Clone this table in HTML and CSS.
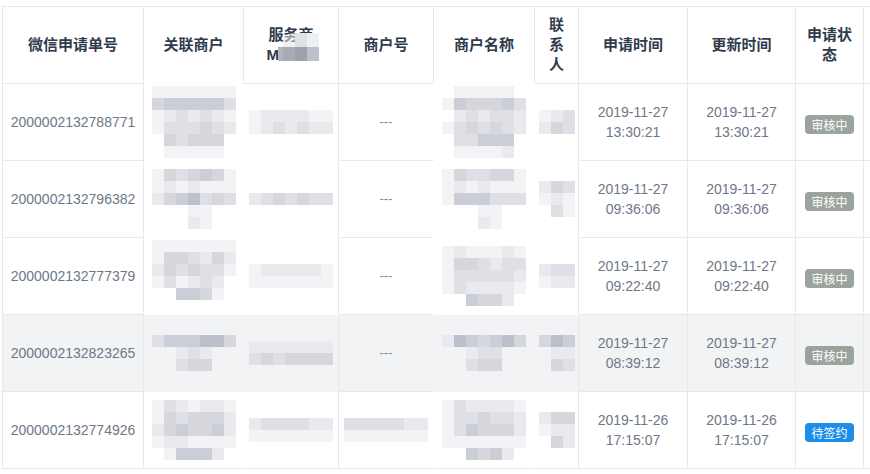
FILE: index.html
```html
<!DOCTYPE html>
<html lang="zh-CN">
<head>
<meta charset="utf-8">
<title>申请单列表</title>
<link rel="stylesheet" href="styles.css">
</head>
<body>
<div class="viewport">
  <div class="grid">
    <div class="row head">
      <div class="cell">微信申请单号</div>
      <div class="cell">关联商户</div>
      <div class="cell mch">服务商<br>MCHID
        <div class="mch-cover"><i class="h1"></i><i class="h2"></i><i class="h3"></i><i class="h4"></i><i class="h5"></i><i class="h6"></i><i class="h7"></i><i class="h8"></i></div>
      </div>
      <div class="cell">商户号</div>
      <div class="cell">商户名称</div>
      <div class="cell">联系人</div>
      <div class="cell">申请时间</div>
      <div class="cell">更新时间</div>
      <div class="cell">申请状态</div>
      <div class="cell"></div>
    </div>

    <div class="row">
      <div class="cell">2000002132788771</div>
      <div class="cell nb nr"><div class="mosaic m7" data-map="1111111/4555553/1232321/1333432/0434440/0111110"></div></div>
      <div class="cell nb"><div class="mosaic m7" data-map="1222211/1232322"></div></div>
      <div class="cell nr"><span class="dash">---</span></div>
      <div class="cell nb nr"><div class="mosaic m7" data-map="0111110/1544453/0232332/1343432/0335550/0111120"></div></div>
      <div class="cell nb"><div class="mosaic m3" data-map="123/243"></div></div>
      <div class="cell">2019-11-27<br>13:30:21</div>
      <div class="cell">2019-11-27<br>13:30:21</div>
      <div class="cell"><span class="tag">审核中</span></div>
      <div class="cell"></div>
    </div>

    <div class="row">
      <div class="cell">2000002132796382</div>
      <div class="cell nb nr"><div class="mosaic m7" data-map="1434541/1212111/2456343/0001100/0002100"></div></div>
      <div class="cell nb"><div class="mosaic m7" data-map="2343433"></div></div>
      <div class="cell nr"><span class="dash">---</span></div>
      <div class="cell nb nr"><div class="mosaic m7" data-map="1433441/1212111/1555333/0001100/0002100"></div></div>
      <div class="cell nb"><div class="mosaic m3" data-map="243/121/031"></div></div>
      <div class="cell">2019-11-27<br>09:36:06</div>
      <div class="cell">2019-11-27<br>09:36:06</div>
      <div class="cell"><span class="tag">审核中</span></div>
      <div class="cell"></div>
    </div>

    <div class="row">
      <div class="cell">2000002132777379</div>
      <div class="cell nb nr"><div class="mosaic m7" data-map="1111111/1443242/2434331/1312320/0055410/0000000"></div></div>
      <div class="cell nb"><div class="mosaic m7" data-map="1222221/1111111"></div></div>
      <div class="cell nr"><span class="dash">---</span></div>
      <div class="cell nb nr"><div class="mosaic m7" data-map="1211121/1443233/1333332/1322221/0054420"></div></div>
      <div class="cell nb"><div class="mosaic m3" data-map="233/122"></div></div>
      <div class="cell">2019-11-27<br>09:22:40</div>
      <div class="cell">2019-11-27<br>09:22:40</div>
      <div class="cell"><span class="tag">审核中</span></div>
      <div class="cell"></div>
    </div>

    <div class="row hover">
      <div class="cell">2000002132823265</div>
      <div class="cell nb nr"><div class="mosaic m7" data-map="3555664/0023200/0034400"></div></div>
      <div class="cell nb"><div class="mosaic m7" data-map="2222222/3434444"></div></div>
      <div class="cell nr"><span class="dash">---</span></div>
      <div class="cell nb nr"><div class="mosaic m7" data-map="2654564/0023300/0034400"></div></div>
      <div class="cell nb"><div class="mosaic m3" data-map="465/022/043"></div></div>
      <div class="cell">2019-11-27<br>08:39:12</div>
      <div class="cell">2019-11-27<br>08:39:12</div>
      <div class="cell"><span class="tag">审核中</span></div>
      <div class="cell"></div>
    </div>

    <div class="row">
      <div class="cell">2000002132774926</div>
      <div class="cell nr"><div class="mosaic m7" data-map="1321221/1434442/2454452/1221111/0155520"></div></div>
      <div class="cell"><div class="mosaic m7" data-map="2333322/1111111"></div></div>
      <div class="cell nr"><div class="mosaic m7" data-map="3333322/1111111"></div></div>
      <div class="cell nr"><div class="mosaic m7" data-map="1322221/1334332/1354442/1111111/0054520"></div></div>
      <div class="cell"><div class="mosaic m3" data-map="244/122/042"></div></div>
      <div class="cell">2019-11-26<br>17:15:07</div>
      <div class="cell">2019-11-26<br>17:15:07</div>
      <div class="cell"><span class="tag blue">待签约</span></div>
      <div class="cell"></div>
    </div>
  </div>
</div>
<script src="script.js"></script>
</body>
</html>
```

FILE: styles.css
```css
* { box-sizing: border-box; }
html, body { margin: 0; background: #fff; }
body {
  font-family: "Liberation Sans", "Noto Sans CJK SC", sans-serif;
  font-size: 14px;
  color: #6d7888;
}
.viewport {
  width: 870px;
  height: 474px;
  overflow: hidden;
  padding: 6px 0 0 2px;
}
.grid {
  display: grid;
  grid-template-columns: 141px 100px 95px 95px 101px 44px 109px 108px 68px 100px;
  grid-auto-rows: 77px;
  width: max-content;
  border-left: 1px solid #e8e8eb;
  border-top: 1px solid #e8e8eb;
}
.row { display: contents; }
.cell {
  display: flex;
  align-items: center;
  justify-content: center;
  text-align: center;
  padding: 0 6px;
  line-height: 20px;
  background: #fff;
  border-right: 1px solid #e8e8eb;
  border-bottom: 1px solid #e8e8eb;
}
.head .cell {
  font-size: 15px;
  font-weight: bold;
  color: #2f3b4d;
  padding: 0 10px;
}
.head .cell:nth-child(2),
.head .cell:nth-child(5) { border-bottom-color: transparent; }
.hover .cell { background: #f2f3f5; }
.nb { border-bottom-color: transparent; }
.nr { border-right-color: transparent; }

.dash { color: #808998; font-size: 13px; }

.tag {
  display: inline-block;
  margin-top: 4px;
  padding: 0 6.5px;
  border-radius: 4px;
  font-family: "Noto Sans CJK SC", sans-serif;
  font-size: 12px;
  line-height: 19px;
  color: #fff;
  background: #9aa49c;
}
.tag.blue { background: #1c8de8; }

.mosaic { display: grid; grid-auto-rows: 12px; }
.m7 { grid-template-columns: repeat(7, 12px); }
.m3 { grid-template-columns: repeat(3, 12px); }
.mosaic i { display: block; }
.s0 { background: transparent; }
.s1 { background: #f3f3f5; }
.s2 { background: #e9eaed; }
.s3 { background: #dfe0e5; }
.s4 { background: #d5d7dd; }
.s5 { background: #cbced6; }
.s6 { background: #bcc0cb; }

.mch { position: relative; }
.mch-cover {
  position: absolute;
  left: 34px;
  top: 26px;
  display: grid;
  grid-template-columns: 5px 12px 12px 12px;
  grid-template-rows: 14px 14px;
}
.mch-cover i { display: block; }
.h1 { background: transparent; }
.h2 { background: rgba(226, 227, 231, 0.55); border-top-left-radius: 10px; }
.h3 { background: #e0e1e5; }
.h4 { background: #eeeff1; }
.h5 { background: #b0b5be; }
.h6 { background: #a6abb5; }
.h7 { background: #9da3ad; }
.h8 { background: #bbc2cc; }
```

FILE: script.js
```js
document.querySelectorAll('.mosaic').forEach(function (m) {
  m.dataset.map.split('/').forEach(function (row) {
    for (var i = 0; i < row.length; i++) {
      var c = document.createElement('i');
      c.className = 's' + row[i];
      m.appendChild(c);
    }
  });
});
```
